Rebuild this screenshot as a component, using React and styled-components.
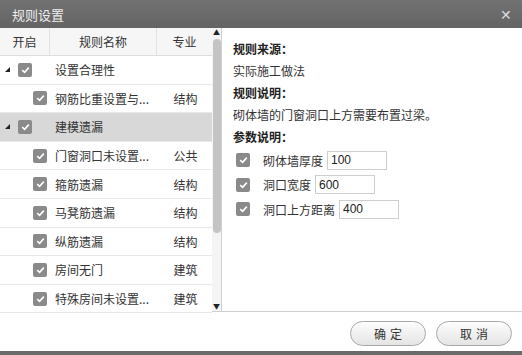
import React, { useState } from "react";
import styled, { createGlobalStyle } from "styled-components";

const GlobalStyle = createGlobalStyle`
  html, body {
    margin: 0;
    padding: 0;
    background: #ffffff;
  }
  body {
    font-family: "Noto Sans CJK SC", "Liberation Sans", sans-serif;
    font-size: 12px;
    color: #333;
  }
`;

const rules = [
  { name: "设置合理性", group: true, open: true },
  { name: "钢筋比重设置与...", major: "结构" },
  { name: "建模遗漏", group: true, open: true, selected: true },
  { name: "门窗洞口未设置...", major: "公共" },
  { name: "箍筋遗漏", major: "结构" },
  { name: "马凳筋遗漏", major: "结构" },
  { name: "纵筋遗漏", major: "结构" },
  { name: "房间无门", major: "建筑" },
  { name: "特殊房间未设置...", major: "建筑" },
];

const params = [
  { label: "砌体墙厚度", value: "100" },
  { label: "洞口宽度", value: "600" },
  { label: "洞口上方距离", value: "400" },
];

const Check = () => (
  <CheckBox>
    <svg width="9" height="8" viewBox="0 0 9 8">
      <path d="M1.2 4.2 L3.6 6.3 L7.8 1.6" fill="none" stroke="#fff" strokeWidth="1.6" />
    </svg>
  </CheckBox>
);

const App = () => {
  const [selected, setSelected] = useState(2);
  return (
    <Dialog>
      <GlobalStyle />
      <TitleBar>
        <span>规则设置</span>
        <Close>✕</Close>
      </TitleBar>
      <Body>
        <LeftPanel>
          <ListArea>
            <HeaderRow>
              <HeadCell $w={50}>开启</HeadCell>
              <HeadCell $w={107}>规则名称</HeadCell>
              <HeadCell $w={55} $last>专业</HeadCell>
            </HeaderRow>
            {rules.map((r, i) => (
              <Row key={r.name} $selected={i === selected} onClick={() => setSelected(i)}>
                <CheckCell $group={r.group}>
                  {r.group && <Arrow />}
                  <Check />
                </CheckCell>
                <NameCell $group={r.group}>{r.name}</NameCell>
                <MajorCell>{r.major}</MajorCell>
              </Row>
            ))}
          </ListArea>
          <ScrollBar>
            <ScrollArrow>▲</ScrollArrow>
            <Track>
              <Thumb />
            </Track>
            <ScrollArrow>▼</ScrollArrow>
          </ScrollBar>
        </LeftPanel>
        <RightPanel>
          <SectionTitle>规则来源：</SectionTitle>
          <Text>实际施工做法</Text>
          <SectionTitle>规则说明：</SectionTitle>
          <Text>砌体墙的门窗洞口上方需要布置过梁。</Text>
          <SectionTitle>参数说明：</SectionTitle>
          {params.map((p) => (
            <ParamRow key={p.label}>
              <Check />
              <ParamLabel>{p.label}</ParamLabel>
              <ParamInput defaultValue={p.value} />
            </ParamRow>
          ))}
        </RightPanel>
      </Body>
      <Footer>
        <Button>确定</Button>
        <Button>取消</Button>
      </Footer>
      <BottomEdge />
    </Dialog>
  );
};

const Dialog = styled.div`
  width: 522px;
  height: 355px;
  display: flex;
  flex-direction: column;
  background: #fff;
  overflow: hidden;
`;

const TitleBar = styled.div`
  height: 28px;
  flex-shrink: 0;
  display: flex;
  align-items: center;
  justify-content: space-between;
  padding: 0 10px 0 12px;
  background: linear-gradient(#727272, #646464);
  color: #eeeeee;
  font-size: 13px;
`;

const Close = styled.span`
  font-size: 14px;
  color: #dcdcdc;
`;

const Body = styled.div`
  height: 283px;
  display: flex;
  border-bottom: 1px solid #cfcfcf;
`;

const LeftPanel = styled.div`
  width: 221px;
  display: flex;
  border-right: 1px solid #d0d0d0;
`;

const ListArea = styled.div`
  width: 212px;
  display: flex;
  flex-direction: column;
`;

const HeaderRow = styled.div`
  height: 27px;
  flex-shrink: 0;
  display: flex;
  background: #f6f6f6;
  border-bottom: 1px solid #dedede;
`;

const HeadCell = styled.div`
  width: ${(p) => p.$w}px;
  display: flex;
  align-items: center;
  justify-content: center;
  border-right: ${(p) => (p.$last ? "none" : "1px solid #e2e2e2")};
  box-sizing: border-box;
`;

const Row = styled.div`
  height: 28.6px;
  flex-shrink: 0;
  box-sizing: border-box;
  display: flex;
  align-items: center;
  background: ${(p) => (p.$selected ? "#d8d8d8" : "#fff")};
  border-bottom: 1px solid #e8e8e8;
  cursor: default;
`;

const CheckCell = styled.div`
  width: 50px;
  display: flex;
  align-items: center;
  padding-left: ${(p) => (p.$group ? "5px" : "33px")};
  gap: 8px;
  box-sizing: border-box;
  flex-shrink: 0;
`;

const Arrow = styled.span`
  width: 0;
  height: 0;
  border-left: 5px solid transparent;
  border-bottom: 5px solid #222;
`;

const CheckBox = styled.span`
  width: 14px;
  height: 14px;
  border-radius: 2px;
  background: #8a8a8a;
  display: inline-flex;
  align-items: center;
  justify-content: center;
  flex-shrink: 0;
`;

const NameCell = styled.div`
  width: 120px;
  padding-left: 5px;
  white-space: nowrap;
  color: #333;
`;

const MajorCell = styled.div`
  width: 42px;
  padding-left: 8px;
  white-space: nowrap;
`;

const ScrollBar = styled.div`
  width: 9px;
  display: flex;
  flex-direction: column;
  align-items: center;
  background: #f4f4f4;
`;

const ScrollArrow = styled.div`
  font-size: 7px;
  line-height: 9px;
  height: 9px;
  color: #222;
`;

const Track = styled.div`
  flex: 1;
  width: 100%;
  padding-top: 2px;
`;

const Thumb = styled.div`
  width: 8px;
  height: 194px;
  margin: 0 auto;
  border-radius: 4px;
  background: #c4c4c4;
`;

const RightPanel = styled.div`
  flex: 1;
  padding: 10px 0 0 11px;
  display: flex;
  flex-direction: column;
`;

const SectionTitle = styled.div`
  font-weight: bold;
  height: 22px;
  line-height: 22px;
  color: #222;
`;

const Text = styled.div`
  height: 22px;
  line-height: 22px;
  color: #333;
`;

const ParamRow = styled.div`
  height: 24.5px;
  display: flex;
  align-items: center;
  padding-left: 3px;
`;

const ParamLabel = styled.span`
  margin-left: 13px;
  margin-right: 4px;
`;

const ParamInput = styled.input`
  width: 52px;
  height: 17px;
  padding: 0 3px;
  border: 1px solid #cfcfcf;
  font-family: "Liberation Sans", sans-serif;
  font-size: 12px;
  color: #222;
  outline: none;
`;

const Footer = styled.div`
  flex: 1;
  display: flex;
  justify-content: flex-end;
  align-items: center;
  gap: 10px;
  padding-right: 10px;
  padding-top: 3px;
`;

const Button = styled.button`
  width: 76px;
  height: 25px;
  border-radius: 13px;
  border: 1px solid #a8a8a8;
  background: linear-gradient(#fdfdfd, #e4e4e4);
  font-family: "Noto Sans CJK SC", sans-serif;
  font-size: 12px;
  letter-spacing: 4px;
  text-indent: 4px;
  color: #333;
  padding: 0;
`;

const BottomEdge = styled.div`
  height: 4px;
  background: #6a6a6a;
`;

export default App;
